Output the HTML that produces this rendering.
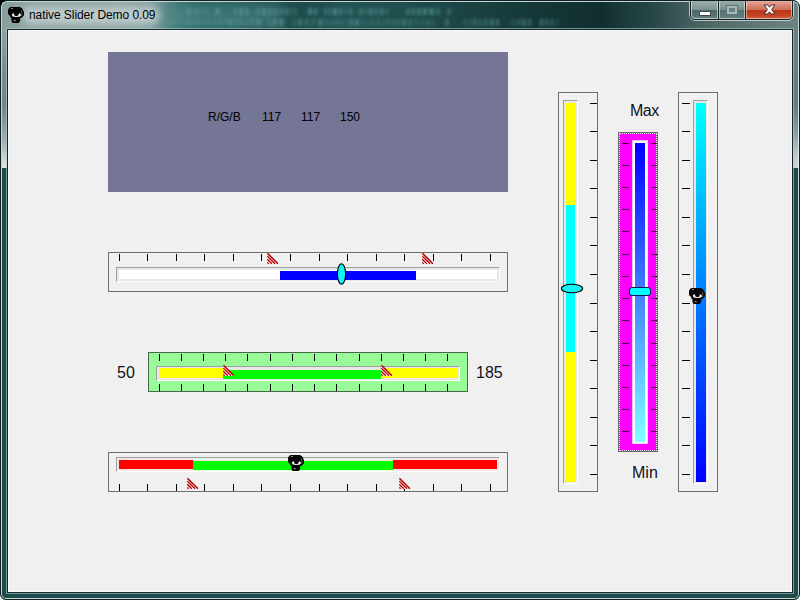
<!DOCTYPE html>
<html><head><meta charset="utf-8"><title>native Slider Demo 0.09</title>
<style>
html,body{margin:0;padding:0}
body{width:800px;height:600px;overflow:hidden;position:relative;background:#f4f6f6;font-family:"Liberation Sans",sans-serif;color:#000}
body div,body svg{position:absolute}
div svg{left:0;top:0}
.t12{font-size:12px;line-height:14px;white-space:nowrap;color:#000}
.t16{font-size:16px;line-height:18px;white-space:nowrap;color:#10101c}
#win{left:0;top:0;width:800px;height:600px;box-sizing:border-box;border:1px solid #14201f;border-radius:7px 7px 6px 6px;overflow:hidden;background:#1d4a4a}
</style></head><body>
<div style="left:0;top:0;width:10px;height:10px;background:#000"></div>
<div id="win">
<div style="left:1px;top:1px;width:796px;height:166px;background:linear-gradient(to right,#93a4a4 0,#8c9e9e 8px,#5d7474 9px,#5d7474 786px,#6a7e7e 791px,#728686 100%)"></div>
<div style="left:1px;top:30px;width:7px;height:137px;background:linear-gradient(to bottom,#8da1a1 0,#788e8e 30%,#728888 55%,#9aabab 78%,#d4dcdc 96%,#dfe5e5 100%)"></div>
<div style="left:791px;top:30px;width:7px;height:137px;background:linear-gradient(to bottom,#6c8080 0,#667b7b 55%,#8a9c9c 74%,#c2cccc 92%,#cdd6d6 100%)"></div>
<div id="tb" style="left:1px;top:1px;width:796px;height:28px;background:linear-gradient(to right,#8a9f9f 0,#8da3a3 30px,#8ea4a4 120px,#84a0a0 148px,#5d8a8a 163px,#3c7373 178px,#2f6464 200px,#2a5c5c 250px,#1f4c4c 300px,#245454 350px,#1f4a4a 420px,#1a4040 480px,#153636 540px,#122f2f 600px,#1d3c3c 625px,#274646 650px,#465e5e 690px,#566c6c 720px,#6e8282 796px)">
<div style="left:185px;top:6px;width:264px;height:7px;background:linear-gradient(to right,rgba(98,165,165,0.58) 0px,rgba(98,165,165,0.58) 3px,transparent 3px,transparent 5px,rgba(98,165,165,0.28) 5px,rgba(98,165,165,0.28) 7px,transparent 7px,transparent 9px,rgba(98,165,165,0.45) 9px,rgba(98,165,165,0.45) 12px,transparent 12px,transparent 14px,rgba(98,165,165,0.26) 14px,rgba(98,165,165,0.26) 17px,transparent 17px,transparent 19px,rgba(98,165,165,0.33) 19px,rgba(98,165,165,0.33) 21px,transparent 21px,transparent 23px,transparent 23px,transparent 28px,rgba(98,165,165,0.47) 28px,rgba(98,165,165,0.47) 33px,transparent 33px,transparent 35px,transparent 35px,transparent 40px,transparent 40px,transparent 47px,rgba(98,165,165,0.44) 47px,rgba(98,165,165,0.44) 50px,transparent 50px,transparent 52px,rgba(98,165,165,0.54) 52px,rgba(98,165,165,0.54) 56px,transparent 56px,transparent 58px,rgba(98,165,165,0.45) 58px,rgba(98,165,165,0.45) 62px,transparent 62px,transparent 64px,transparent 64px,transparent 69px,rgba(98,165,165,0.32) 69px,rgba(98,165,165,0.32) 73px,transparent 73px,transparent 75px,rgba(98,165,165,0.52) 75px,rgba(98,165,165,0.52) 79px,transparent 79px,transparent 81px,rgba(98,165,165,0.38) 81px,rgba(98,165,165,0.38) 85px,transparent 85px,transparent 87px,rgba(98,165,165,0.49) 87px,rgba(98,165,165,0.49) 90px,transparent 90px,transparent 92px,rgba(98,165,165,0.36) 92px,rgba(98,165,165,0.36) 96px,transparent 96px,transparent 98px,rgba(98,165,165,0.51) 98px,rgba(98,165,165,0.51) 101px,transparent 101px,transparent 103px,rgba(98,165,165,0.29) 103px,rgba(98,165,165,0.29) 105px,transparent 105px,transparent 107px,rgba(98,165,165,0.30) 107px,rgba(98,165,165,0.30) 110px,transparent 110px,transparent 112px,transparent 112px,transparent 121px,rgba(98,165,165,0.53) 121px,rgba(98,165,165,0.53) 125px,transparent 125px,transparent 127px,rgba(98,165,165,0.49) 127px,rgba(98,165,165,0.49) 130px,transparent 130px,transparent 132px,transparent 132px,transparent 137px,rgba(98,165,165,0.42) 137px,rgba(98,165,165,0.42) 140px,transparent 140px,transparent 142px,rgba(98,165,165,0.51) 142px,rgba(98,165,165,0.51) 144px,transparent 144px,transparent 146px,rgba(98,165,165,0.60) 146px,rgba(98,165,165,0.60) 150px,transparent 150px,transparent 152px,rgba(98,165,165,0.50) 152px,rgba(98,165,165,0.50) 155px,transparent 155px,transparent 157px,rgba(98,165,165,0.26) 157px,rgba(98,165,165,0.26) 160px,transparent 160px,transparent 162px,rgba(98,165,165,0.46) 162px,rgba(98,165,165,0.46) 165px,transparent 165px,transparent 167px,transparent 167px,transparent 172px,rgba(98,165,165,0.39) 172px,rgba(98,165,165,0.39) 176px,transparent 176px,transparent 178px,rgba(98,165,165,0.31) 178px,rgba(98,165,165,0.31) 180px,transparent 180px,transparent 182px,rgba(98,165,165,0.56) 182px,rgba(98,165,165,0.56) 185px,transparent 185px,transparent 187px,rgba(98,165,165,0.35) 187px,rgba(98,165,165,0.35) 191px,transparent 191px,transparent 193px,rgba(98,165,165,0.49) 193px,rgba(98,165,165,0.49) 196px,transparent 196px,transparent 198px,rgba(98,165,165,0.30) 198px,rgba(98,165,165,0.30) 201px,transparent 201px,transparent 203px,transparent 203px,transparent 212px,transparent 212px,transparent 219px,rgba(98,165,165,0.38) 219px,rgba(98,165,165,0.38) 223px,transparent 223px,transparent 225px,rgba(98,165,165,0.49) 225px,rgba(98,165,165,0.49) 228px,transparent 228px,transparent 230px,rgba(98,165,165,0.48) 230px,rgba(98,165,165,0.48) 234px,transparent 234px,transparent 236px,rgba(98,165,165,0.56) 236px,rgba(98,165,165,0.56) 240px,transparent 240px,transparent 242px,rgba(98,165,165,0.53) 242px,rgba(98,165,165,0.53) 247px,transparent 247px,transparent 249px,rgba(98,165,165,0.39) 249px,rgba(98,165,165,0.39) 253px,transparent 253px,transparent 255px,transparent 255px,transparent 260px,rgba(98,165,165,0.31) 260px,rgba(98,165,165,0.31) 264px,transparent 264px,transparent 266px);filter:blur(1.4px)"></div>
<div style="left:165px;top:17px;width:394px;height:7px;background:linear-gradient(to right,rgba(98,165,165,0.23) 0px,rgba(98,165,165,0.23) 2px,transparent 2px,transparent 4px,rgba(98,165,165,0.23) 4px,rgba(98,165,165,0.23) 8px,transparent 8px,transparent 10px,rgba(98,165,165,0.22) 10px,rgba(98,165,165,0.22) 12px,transparent 12px,transparent 14px,rgba(98,165,165,0.24) 14px,rgba(98,165,165,0.24) 18px,transparent 18px,transparent 20px,rgba(98,165,165,0.38) 20px,rgba(98,165,165,0.38) 23px,transparent 23px,transparent 25px,rgba(98,165,165,0.45) 25px,rgba(98,165,165,0.45) 27px,transparent 27px,transparent 29px,rgba(98,165,165,0.34) 29px,rgba(98,165,165,0.34) 33px,transparent 33px,transparent 35px,rgba(98,165,165,0.23) 35px,rgba(98,165,165,0.23) 38px,transparent 38px,transparent 40px,rgba(98,165,165,0.34) 40px,rgba(98,165,165,0.34) 43px,transparent 43px,transparent 45px,rgba(98,165,165,0.21) 45px,rgba(98,165,165,0.21) 49px,transparent 49px,transparent 51px,rgba(98,165,165,0.31) 51px,rgba(98,165,165,0.31) 55px,transparent 55px,transparent 57px,rgba(98,165,165,0.43) 57px,rgba(98,165,165,0.43) 59px,transparent 59px,transparent 61px,rgba(98,165,165,0.46) 61px,rgba(98,165,165,0.46) 66px,transparent 66px,transparent 68px,rgba(98,165,165,0.36) 68px,rgba(98,165,165,0.36) 71px,transparent 71px,transparent 73px,rgba(98,165,165,0.43) 73px,rgba(98,165,165,0.43) 76px,transparent 76px,transparent 78px,rgba(98,165,165,0.30) 78px,rgba(98,165,165,0.30) 82px,transparent 82px,transparent 84px,rgba(98,165,165,0.44) 84px,rgba(98,165,165,0.44) 87px,transparent 87px,transparent 89px,rgba(98,165,165,0.44) 89px,rgba(98,165,165,0.44) 94px,transparent 94px,transparent 96px,transparent 96px,transparent 101px,rgba(98,165,165,0.34) 101px,rgba(98,165,165,0.34) 104px,transparent 104px,transparent 106px,rgba(98,165,165,0.49) 106px,rgba(98,165,165,0.49) 110px,transparent 110px,transparent 112px,rgba(98,165,165,0.50) 112px,rgba(98,165,165,0.50) 117px,transparent 117px,transparent 119px,transparent 119px,transparent 126px,rgba(98,165,165,0.30) 126px,rgba(98,165,165,0.30) 129px,transparent 129px,transparent 131px,rgba(98,165,165,0.45) 131px,rgba(98,165,165,0.45) 135px,transparent 135px,transparent 137px,rgba(98,165,165,0.30) 137px,rgba(98,165,165,0.30) 142px,transparent 142px,transparent 144px,rgba(98,165,165,0.24) 144px,rgba(98,165,165,0.24) 149px,transparent 149px,transparent 151px,rgba(98,165,165,0.43) 151px,rgba(98,165,165,0.43) 156px,transparent 156px,transparent 158px,rgba(98,165,165,0.33) 158px,rgba(98,165,165,0.33) 161px,transparent 161px,transparent 163px,rgba(98,165,165,0.44) 163px,rgba(98,165,165,0.44) 165px,transparent 165px,transparent 167px,rgba(98,165,165,0.34) 167px,rgba(98,165,165,0.34) 171px,transparent 171px,transparent 173px,rgba(98,165,165,0.42) 173px,rgba(98,165,165,0.42) 175px,transparent 175px,transparent 177px,rgba(98,165,165,0.21) 177px,rgba(98,165,165,0.21) 180px,transparent 180px,transparent 182px,rgba(98,165,165,0.44) 182px,rgba(98,165,165,0.44) 186px,transparent 186px,transparent 188px,rgba(98,165,165,0.49) 188px,rgba(98,165,165,0.49) 192px,transparent 192px,transparent 194px,rgba(98,165,165,0.25) 194px,rgba(98,165,165,0.25) 197px,transparent 197px,transparent 199px,rgba(98,165,165,0.20) 199px,rgba(98,165,165,0.20) 201px,transparent 201px,transparent 203px,rgba(98,165,165,0.23) 203px,rgba(98,165,165,0.23) 208px,transparent 208px,transparent 210px,rgba(98,165,165,0.33) 210px,rgba(98,165,165,0.33) 213px,transparent 213px,transparent 215px,rgba(98,165,165,0.21) 215px,rgba(98,165,165,0.21) 218px,transparent 218px,transparent 220px,rgba(98,165,165,0.27) 220px,rgba(98,165,165,0.27) 224px,transparent 224px,transparent 226px,rgba(98,165,165,0.36) 226px,rgba(98,165,165,0.36) 229px,transparent 229px,transparent 231px,rgba(98,165,165,0.47) 231px,rgba(98,165,165,0.47) 233px,transparent 233px,transparent 235px,rgba(98,165,165,0.40) 235px,rgba(98,165,165,0.40) 239px,transparent 239px,transparent 241px,rgba(98,165,165,0.33) 241px,rgba(98,165,165,0.33) 245px,transparent 245px,transparent 247px,rgba(98,165,165,0.24) 247px,rgba(98,165,165,0.24) 251px,transparent 251px,transparent 253px,rgba(98,165,165,0.21) 253px,rgba(98,165,165,0.21) 257px,transparent 257px,transparent 259px,rgba(98,165,165,0.38) 259px,rgba(98,165,165,0.38) 262px,transparent 262px,transparent 264px,rgba(98,165,165,0.25) 264px,rgba(98,165,165,0.25) 267px,transparent 267px,transparent 269px,transparent 269px,transparent 278px,rgba(98,165,165,0.36) 278px,rgba(98,165,165,0.36) 282px,transparent 282px,transparent 284px,transparent 284px,transparent 289px,transparent 289px,transparent 296px,rgba(98,165,165,0.21) 296px,rgba(98,165,165,0.21) 300px,transparent 300px,transparent 302px,rgba(98,165,165,0.33) 302px,rgba(98,165,165,0.33) 304px,transparent 304px,transparent 306px,rgba(98,165,165,0.38) 306px,rgba(98,165,165,0.38) 310px,transparent 310px,transparent 312px,rgba(98,165,165,0.34) 312px,rgba(98,165,165,0.34) 315px,transparent 315px,transparent 317px,rgba(98,165,165,0.35) 317px,rgba(98,165,165,0.35) 321px,transparent 321px,transparent 323px,rgba(98,165,165,0.46) 323px,rgba(98,165,165,0.46) 327px,transparent 327px,transparent 329px,rgba(98,165,165,0.48) 329px,rgba(98,165,165,0.48) 332px,transparent 332px,transparent 334px,transparent 334px,transparent 339px,transparent 339px,transparent 344px,rgba(98,165,165,0.22) 344px,rgba(98,165,165,0.22) 348px,transparent 348px,transparent 350px,rgba(98,165,165,0.47) 350px,rgba(98,165,165,0.47) 352px,transparent 352px,transparent 354px,rgba(98,165,165,0.39) 354px,rgba(98,165,165,0.39) 359px,transparent 359px,transparent 361px,rgba(98,165,165,0.46) 361px,rgba(98,165,165,0.46) 364px,transparent 364px,transparent 366px,transparent 366px,transparent 373px,rgba(98,165,165,0.50) 373px,rgba(98,165,165,0.50) 376px,transparent 376px,transparent 378px,rgba(98,165,165,0.41) 378px,rgba(98,165,165,0.41) 381px,transparent 381px,transparent 383px,rgba(98,165,165,0.30) 383px,rgba(98,165,165,0.30) 387px,transparent 387px,transparent 389px,rgba(98,165,165,0.23) 389px,rgba(98,165,165,0.23) 392px,transparent 392px,transparent 394px);filter:blur(1.4px)"></div>
<div style="left:168px;top:3px;width:110px;height:22px;background:#5a9a9a;opacity:.35;filter:blur(6px)"></div>
<div style="left:20px;top:5px;width:138px;height:17px;border-radius:9px;background:#d0d9d9;opacity:.75;filter:blur(4.5px)"></div>
</div>
<div style="left:0;top:0;width:796px;height:596px;border:1px solid rgba(235,250,250,.8);border-radius:6px 6px 5px 5px"></div>
<div style="left:5px;top:27px;width:786px;height:564px;border:1px solid rgba(170,208,208,.6)"></div>
<div style="left:6px;top:28px;width:784px;height:562px;border:1px solid #16262a"></div>
<div style="left:7px;top:6px;width:16px;height:16px"><svg viewBox="0 0 16 16" width="16" height="16"><path d="M2.5,0H12L14,1.2L15,3L16,5V8.5L14.8,9.2V10.2L12.2,11V14L10.6,16H4.6L3.4,14V11L2.2,10.6V8.7L0.6,8.1L0,6V3L1,1Z" fill="#050505"/><ellipse cx="8.4" cy="8" rx="4.5" ry="1.9" fill="#fff"/><ellipse cx="8.4" cy="7.1" rx="2.5" ry="2.1" fill="#050505"/><path d="M13.2,3.5Q14.6,6 13.6,9" stroke="#777" stroke-width=".7" fill="none"/><rect x="5.6" y="13" width="2.2" height="1.2" fill="#888"/><rect x="3" y="1" width="1.8" height="0.9" fill="#aaa"/></svg></div>
<div id="ttl" style="left:28px;top:6px;font-size:12px;line-height:16px;white-space:nowrap;color:#000;letter-spacing:-.07px">native Slider Demo 0.09</div>
<div id="btns" style="left:688px;top:-2px;width:103px;height:20px;border:1px solid rgba(225,240,240,.7);border-radius:0 0 6px 6px">
<div style="left:0;top:0;width:101px;height:18px;border:1px solid #152222;border-radius:0 0 5px 5px;overflow:hidden;background:#6d8484">
<div style="left:0;top:0;width:27px;height:18px;background:linear-gradient(to bottom,#9db0b0 0,#8ea2a2 20%,#7d9393 48%,#4d6868 52%,#587373 80%,#678181 100%);border-right:1px solid #152222"></div>
<div style="left:28px;top:0;width:26px;height:18px;background:linear-gradient(to bottom,#9aadad 0,#8a9f9f 20%,#7b9191 48%,#557070 52%,#5e7979 80%,#6b8484 100%);border-right:1px solid #152222"></div>
<div style="left:55px;top:0;width:46px;height:18px;background:linear-gradient(to bottom,#e6ab9c 0,#dc8d7b 20%,#d0705c 48%,#bd3518 52%,#c44526 80%,#d0633f 100%)"></div>
<div style="left:0;top:-1px;width:25px;height:17px;border:1px solid rgba(255,255,255,.55);border-radius:0 0 0 4px"></div>
<div style="left:28px;top:-1px;width:24px;height:17px;border:1px solid rgba(255,255,255,.5)"></div>
<div style="left:55px;top:-1px;width:44px;height:17px;border:1px solid rgba(255,255,255,.5);border-radius:0 0 4px 0"></div>
<div style="left:8px;top:10px;width:10px;height:3px;background:#fff;border:1px solid #3c4c4c"></div>
<div style="left:36px;top:5px;width:6px;height:4px;border:2px solid #a7b8b8;background:#6b8282;outline:1px solid #5f7575"></div>
<svg style="left:71px;top:2px" width="16" height="14" viewBox="0 0 16 14"><path d="M2,2H5.7L7.5,4.2L9.3,2H13L9.5,6.5L13,11H9.3L7.5,8.8L5.7,11H2L5.5,6.5Z" fill="#fff" stroke="#3e2a2a" stroke-width="1" stroke-linejoin="round"/></svg>
</div>
</div>
</div>

<div style="left:8px;top:30px;width:784px;height:562px;background:#f0f0f0;box-shadow:inset 0 0 0 1px #f9f9f9"></div>
<div style="left:108px;top:52px;width:400px;height:140px;background:#757596"></div>
<div class="t12" style="left:208px;top:110px">R/G/B</div>
<div class="t12" style="left:262px;top:110px">117</div>
<div class="t12" style="left:301px;top:110px">117</div>
<div class="t12" style="left:340px;top:110px">150</div>
<div style="left:108px;top:252px;width:400px;height:40px;box-sizing:border-box;border:1px solid #6e6e6e"></div>
<div style="left:119px;top:254px;width:1px;height:7px;background:#000"></div>
<div style="left:147px;top:254px;width:1px;height:7px;background:#000"></div>
<div style="left:176px;top:254px;width:1px;height:7px;background:#000"></div>
<div style="left:204px;top:254px;width:1px;height:7px;background:#000"></div>
<div style="left:233px;top:254px;width:1px;height:7px;background:#000"></div>
<div style="left:261px;top:254px;width:1px;height:7px;background:#000"></div>
<div style="left:290px;top:254px;width:1px;height:7px;background:#000"></div>
<div style="left:319px;top:254px;width:1px;height:7px;background:#000"></div>
<div style="left:347px;top:254px;width:1px;height:7px;background:#000"></div>
<div style="left:376px;top:254px;width:1px;height:7px;background:#000"></div>
<div style="left:404px;top:254px;width:1px;height:7px;background:#000"></div>
<div style="left:433px;top:254px;width:1px;height:7px;background:#000"></div>
<div style="left:461px;top:254px;width:1px;height:7px;background:#000"></div>
<div style="left:490px;top:254px;width:1px;height:7px;background:#000"></div>
<div style="left:116px;top:267px;width:384px;height:15px;box-sizing:border-box;border:1px solid;border-color:#a0a0a0 #fff #fff #a0a0a0;background:#e6e6e6"></div>
<div style="left:119px;top:270px;width:378px;height:9px;background:#fff"></div>
<div style="left:280px;top:271px;width:136px;height:9px;background:#0000ff"></div>
<svg style="left:267px;top:252px" width="13" height="13" viewBox="0 0 13 13"><path d="M0.2,0.8V12H11.4Z" fill="#f6f2f2"/><g stroke="#b80000" stroke-width="1.25" fill="none"><path d="M0.4,1.3L10.9,11.8" stroke-width="1.6"/><path d="M0.3,4.1L8,11.8"/><path d="M0.3,7.3L4.8,11.8"/><path d="M0.3,10.4L1.7,11.8"/></g></svg>
<svg style="left:422px;top:252px" width="13" height="13" viewBox="0 0 13 13"><path d="M0.2,0.8V12H11.4Z" fill="#f6f2f2"/><g stroke="#b80000" stroke-width="1.25" fill="none"><path d="M0.4,1.3L10.9,11.8" stroke-width="1.6"/><path d="M0.3,4.1L8,11.8"/><path d="M0.3,7.3L4.8,11.8"/><path d="M0.3,10.4L1.7,11.8"/></g></svg>
<svg style="left:336px;top:262px" width="12" height="24" viewBox="0 0 12 24"><ellipse cx="5.5" cy="12" rx="4.1" ry="10.3" fill="#14f4f4" stroke="#000" stroke-width="1.1"/></svg>
<div class="t16" style="left:117px;top:364px">50</div>
<div class="t16" style="left:476px;top:364px">185</div>
<div style="left:148px;top:352px;width:320px;height:40px;box-sizing:border-box;border:1px solid #4a6a4c;background:#98fb98"></div>
<div style="left:159px;top:354px;width:1px;height:7px;background:#000"></div>
<div style="left:159px;top:384px;width:1px;height:7px;background:#000"></div>
<div style="left:181px;top:354px;width:1px;height:7px;background:#000"></div>
<div style="left:181px;top:384px;width:1px;height:7px;background:#000"></div>
<div style="left:203px;top:354px;width:1px;height:7px;background:#000"></div>
<div style="left:203px;top:384px;width:1px;height:7px;background:#000"></div>
<div style="left:225px;top:354px;width:1px;height:7px;background:#000"></div>
<div style="left:225px;top:384px;width:1px;height:7px;background:#000"></div>
<div style="left:247px;top:354px;width:1px;height:7px;background:#000"></div>
<div style="left:247px;top:384px;width:1px;height:7px;background:#000"></div>
<div style="left:270px;top:354px;width:1px;height:7px;background:#000"></div>
<div style="left:270px;top:384px;width:1px;height:7px;background:#000"></div>
<div style="left:292px;top:354px;width:1px;height:7px;background:#000"></div>
<div style="left:292px;top:384px;width:1px;height:7px;background:#000"></div>
<div style="left:314px;top:354px;width:1px;height:7px;background:#000"></div>
<div style="left:314px;top:384px;width:1px;height:7px;background:#000"></div>
<div style="left:336px;top:354px;width:1px;height:7px;background:#000"></div>
<div style="left:336px;top:384px;width:1px;height:7px;background:#000"></div>
<div style="left:359px;top:354px;width:1px;height:7px;background:#000"></div>
<div style="left:359px;top:384px;width:1px;height:7px;background:#000"></div>
<div style="left:381px;top:354px;width:1px;height:7px;background:#000"></div>
<div style="left:381px;top:384px;width:1px;height:7px;background:#000"></div>
<div style="left:403px;top:354px;width:1px;height:7px;background:#000"></div>
<div style="left:403px;top:384px;width:1px;height:7px;background:#000"></div>
<div style="left:425px;top:354px;width:1px;height:7px;background:#000"></div>
<div style="left:425px;top:384px;width:1px;height:7px;background:#000"></div>
<div style="left:447px;top:354px;width:1px;height:7px;background:#000"></div>
<div style="left:447px;top:384px;width:1px;height:7px;background:#000"></div>
<div style="left:156px;top:366px;width:304px;height:15px;box-sizing:border-box;border:1px solid;border-color:#a0a0a0 #fff #fff #a0a0a0;background:#e6e6e6"></div>
<div style="left:159px;top:369px;width:298px;height:9px;background:#e6e6e6"></div>
<div style="left:159px;top:368px;width:64px;height:10px;background:#ffff00"></div>
<div style="left:381px;top:368px;width:76px;height:10px;background:#ffff00"></div>
<div style="left:223px;top:370px;width:158px;height:9px;background:#00ff00"></div>
<svg style="left:223px;top:364px" width="13" height="13" viewBox="0 0 13 13"><path d="M0.2,0.8V12H11.4Z" fill="#fdf8f8"/><g stroke="#b80000" stroke-width="1.25" fill="none"><path d="M0.4,1.3L10.9,11.8" stroke-width="1.6"/><path d="M0.3,4.1L8,11.8"/><path d="M0.3,7.3L4.8,11.8"/><path d="M0.3,10.4L1.7,11.8"/></g></svg>
<svg style="left:381px;top:364px" width="13" height="13" viewBox="0 0 13 13"><path d="M0.2,0.8V12H11.4Z" fill="#fdf8f8"/><g stroke="#b80000" stroke-width="1.25" fill="none"><path d="M0.4,1.3L10.9,11.8" stroke-width="1.6"/><path d="M0.3,4.1L8,11.8"/><path d="M0.3,7.3L4.8,11.8"/><path d="M0.3,10.4L1.7,11.8"/></g></svg>
<div style="left:108px;top:452px;width:400px;height:40px;box-sizing:border-box;border:1px solid #6e6e6e"></div>
<div style="left:119px;top:484px;width:1px;height:7px;background:#000"></div>
<div style="left:147px;top:484px;width:1px;height:7px;background:#000"></div>
<div style="left:176px;top:484px;width:1px;height:7px;background:#000"></div>
<div style="left:204px;top:484px;width:1px;height:7px;background:#000"></div>
<div style="left:233px;top:484px;width:1px;height:7px;background:#000"></div>
<div style="left:261px;top:484px;width:1px;height:7px;background:#000"></div>
<div style="left:290px;top:484px;width:1px;height:7px;background:#000"></div>
<div style="left:319px;top:484px;width:1px;height:7px;background:#000"></div>
<div style="left:347px;top:484px;width:1px;height:7px;background:#000"></div>
<div style="left:376px;top:484px;width:1px;height:7px;background:#000"></div>
<div style="left:404px;top:484px;width:1px;height:7px;background:#000"></div>
<div style="left:433px;top:484px;width:1px;height:7px;background:#000"></div>
<div style="left:461px;top:484px;width:1px;height:7px;background:#000"></div>
<div style="left:490px;top:484px;width:1px;height:7px;background:#000"></div>
<div style="left:116px;top:457px;width:384px;height:15px;box-sizing:border-box;border:1px solid;border-color:#a0a0a0 #fff #fff #a0a0a0;background:linear-gradient(to right,#f8e6e6 0,#f8e6e6 76px,#e6f6e6 76px,#e6f6e6 276px,#f8e6e6 276px)"></div>
<div style="left:119px;top:460px;width:378px;height:9px;background:#f6e6e6"></div>
<div style="left:119px;top:460px;width:74px;height:9px;background:#ff0000"></div>
<div style="left:393px;top:460px;width:104px;height:9px;background:#ff0000"></div>
<div style="left:193px;top:461px;width:200px;height:9px;background:#00ff00"></div>
<svg style="left:187px;top:477px" width="13" height="13" viewBox="0 0 13 13"><path d="M0.2,0.8V12H11.4Z" fill="#f6f2f2"/><g stroke="#b80000" stroke-width="1.25" fill="none"><path d="M0.4,1.3L10.9,11.8" stroke-width="1.6"/><path d="M0.3,4.1L8,11.8"/><path d="M0.3,7.3L4.8,11.8"/><path d="M0.3,10.4L1.7,11.8"/></g></svg>
<svg style="left:399px;top:477px" width="13" height="13" viewBox="0 0 13 13"><path d="M0.2,0.8V12H11.4Z" fill="#f6f2f2"/><g stroke="#b80000" stroke-width="1.25" fill="none"><path d="M0.4,1.3L10.9,11.8" stroke-width="1.6"/><path d="M0.3,4.1L8,11.8"/><path d="M0.3,7.3L4.8,11.8"/><path d="M0.3,10.4L1.7,11.8"/></g></svg>
<div style="left:288px;top:455px;width:16px;height:16px"><svg viewBox="0 0 16 16" width="16" height="16"><path d="M2.5,0H12L14,1.2L15,3L16,5V8.5L14.8,9.2V10.2L12.2,11V14L10.6,16H4.6L3.4,14V11L2.2,10.6V8.7L0.6,8.1L0,6V3L1,1Z" fill="#050505"/><ellipse cx="8.4" cy="8" rx="4.5" ry="1.9" fill="#fff"/><ellipse cx="8.4" cy="7.1" rx="2.5" ry="2.1" fill="#050505"/><path d="M13.2,3.5Q14.6,6 13.6,9" stroke="#777" stroke-width=".7" fill="none"/><rect x="5.6" y="13" width="2.2" height="1.2" fill="#888"/><rect x="3" y="1" width="1.8" height="0.9" fill="#aaa"/></svg></div>
<div style="left:558px;top:92px;width:40px;height:400px;box-sizing:border-box;border:1px solid #6e6e6e"></div>
<div style="left:590px;top:103px;width:7px;height:1px;background:#000"></div>
<div style="left:590px;top:131px;width:7px;height:1px;background:#000"></div>
<div style="left:590px;top:160px;width:7px;height:1px;background:#000"></div>
<div style="left:590px;top:188px;width:7px;height:1px;background:#000"></div>
<div style="left:590px;top:217px;width:7px;height:1px;background:#000"></div>
<div style="left:590px;top:245px;width:7px;height:1px;background:#000"></div>
<div style="left:590px;top:274px;width:7px;height:1px;background:#000"></div>
<div style="left:590px;top:303px;width:7px;height:1px;background:#000"></div>
<div style="left:590px;top:331px;width:7px;height:1px;background:#000"></div>
<div style="left:590px;top:360px;width:7px;height:1px;background:#000"></div>
<div style="left:590px;top:388px;width:7px;height:1px;background:#000"></div>
<div style="left:590px;top:417px;width:7px;height:1px;background:#000"></div>
<div style="left:590px;top:445px;width:7px;height:1px;background:#000"></div>
<div style="left:590px;top:474px;width:7px;height:1px;background:#000"></div>
<div style="left:563px;top:100px;width:15px;height:384px;box-sizing:border-box;border:1px solid;border-color:#a0a0a0 #fff #fff #a0a0a0;background:#e6e6e6"></div>
<div style="left:566px;top:103px;width:9px;height:378px;background:#fff"></div>
<div style="left:566px;top:103px;width:10px;height:102px;background:#ffff00"></div>
<div style="left:566px;top:352px;width:10px;height:130px;background:#ffff00"></div>
<div style="left:566px;top:205px;width:9px;height:147px;background:#00ffff"></div>
<svg style="left:560px;top:282px" width="24" height="13" viewBox="0 0 24 13"><ellipse cx="12" cy="6.5" rx="10.6" ry="4.2" fill="#14f4f4" stroke="#000" stroke-width="1.1"/></svg>
<div class="t16" style="left:630px;top:102px;letter-spacing:-.55px">Max</div>
<div class="t16" style="left:632px;top:464px">Min</div>
<div style="left:618px;top:132px;width:40px;height:320px;box-sizing:border-box;border:1px solid #6a6a6a;background:#ff00ff"></div>
<div style="left:619px;top:133px;width:38px;height:318px;box-sizing:border-box;border:1px solid #7c5c7c"></div>
<div style="left:619px;top:133px;width:38px;height:318px;box-sizing:border-box;border:1px dotted #f0e4f0"></div>
<div style="left:622px;top:143px;width:7px;height:1px;background:#4a004a"></div>
<div style="left:651px;top:143px;width:6px;height:1px;background:#4a004a"></div>
<div style="left:622px;top:165px;width:7px;height:1px;background:#4a004a"></div>
<div style="left:651px;top:165px;width:6px;height:1px;background:#4a004a"></div>
<div style="left:622px;top:187px;width:7px;height:1px;background:#4a004a"></div>
<div style="left:651px;top:187px;width:6px;height:1px;background:#4a004a"></div>
<div style="left:622px;top:209px;width:7px;height:1px;background:#4a004a"></div>
<div style="left:651px;top:209px;width:6px;height:1px;background:#4a004a"></div>
<div style="left:622px;top:231px;width:7px;height:1px;background:#4a004a"></div>
<div style="left:651px;top:231px;width:6px;height:1px;background:#4a004a"></div>
<div style="left:622px;top:254px;width:7px;height:1px;background:#4a004a"></div>
<div style="left:651px;top:254px;width:6px;height:1px;background:#4a004a"></div>
<div style="left:622px;top:276px;width:7px;height:1px;background:#4a004a"></div>
<div style="left:651px;top:276px;width:6px;height:1px;background:#4a004a"></div>
<div style="left:622px;top:298px;width:7px;height:1px;background:#4a004a"></div>
<div style="left:651px;top:298px;width:6px;height:1px;background:#4a004a"></div>
<div style="left:622px;top:320px;width:7px;height:1px;background:#4a004a"></div>
<div style="left:651px;top:320px;width:6px;height:1px;background:#4a004a"></div>
<div style="left:622px;top:343px;width:7px;height:1px;background:#4a004a"></div>
<div style="left:651px;top:343px;width:6px;height:1px;background:#4a004a"></div>
<div style="left:622px;top:365px;width:7px;height:1px;background:#4a004a"></div>
<div style="left:651px;top:365px;width:6px;height:1px;background:#4a004a"></div>
<div style="left:622px;top:387px;width:7px;height:1px;background:#4a004a"></div>
<div style="left:651px;top:387px;width:6px;height:1px;background:#4a004a"></div>
<div style="left:622px;top:409px;width:7px;height:1px;background:#4a004a"></div>
<div style="left:651px;top:409px;width:6px;height:1px;background:#4a004a"></div>
<div style="left:622px;top:431px;width:7px;height:1px;background:#4a004a"></div>
<div style="left:651px;top:431px;width:6px;height:1px;background:#4a004a"></div>
<div style="left:632px;top:140px;width:16px;height:304px;box-sizing:border-box;border:1px solid;border-color:#dcc4ea #f6dcf9 #f6dcf9 #dcc4ea;background:#fbf6ff"></div>
<div style="left:635px;top:143px;width:10px;height:299px;background:linear-gradient(to bottom,#0000ff,#80ffff)"></div>
<div style="left:629px;top:287px;width:22px;height:9px;box-sizing:border-box;border:1px solid #0a1a50;border-radius:3px;background:#00ffff"></div>
<div style="left:678px;top:92px;width:40px;height:400px;box-sizing:border-box;border:1px solid #6e6e6e"></div>
<div style="left:682px;top:103px;width:8px;height:1px;background:#000"></div>
<div style="left:682px;top:131px;width:8px;height:1px;background:#000"></div>
<div style="left:682px;top:160px;width:8px;height:1px;background:#000"></div>
<div style="left:682px;top:188px;width:8px;height:1px;background:#000"></div>
<div style="left:682px;top:217px;width:8px;height:1px;background:#000"></div>
<div style="left:682px;top:245px;width:8px;height:1px;background:#000"></div>
<div style="left:682px;top:274px;width:8px;height:1px;background:#000"></div>
<div style="left:682px;top:303px;width:8px;height:1px;background:#000"></div>
<div style="left:682px;top:331px;width:8px;height:1px;background:#000"></div>
<div style="left:682px;top:360px;width:8px;height:1px;background:#000"></div>
<div style="left:682px;top:388px;width:8px;height:1px;background:#000"></div>
<div style="left:682px;top:417px;width:8px;height:1px;background:#000"></div>
<div style="left:682px;top:445px;width:8px;height:1px;background:#000"></div>
<div style="left:682px;top:474px;width:8px;height:1px;background:#000"></div>
<div style="left:693px;top:100px;width:15px;height:384px;box-sizing:border-box;border:1px solid;border-color:#a0a0a0 #fff #fff #a0a0a0;background:#e6e6e6"></div>
<div style="left:696px;top:103px;width:9px;height:378px;background:#fff"></div>
<div style="left:696px;top:103px;width:10px;height:379px;background:linear-gradient(to bottom,#00ffff,#0000ff)"></div>
<div style="left:689px;top:288px;width:16px;height:16px"><svg viewBox="0 0 16 16" width="16" height="16"><path d="M2.5,0H12L14,1.2L15,3L16,5V8.5L14.8,9.2V10.2L12.2,11V14L10.6,16H4.6L3.4,14V11L2.2,10.6V8.7L0.6,8.1L0,6V3L1,1Z" fill="#050505"/><ellipse cx="8.4" cy="8" rx="4.5" ry="1.9" fill="#fff"/><ellipse cx="8.4" cy="7.1" rx="2.5" ry="2.1" fill="#050505"/><path d="M13.2,3.5Q14.6,6 13.6,9" stroke="#777" stroke-width=".7" fill="none"/><rect x="5.6" y="13" width="2.2" height="1.2" fill="#888"/><rect x="3" y="1" width="1.8" height="0.9" fill="#aaa"/></svg></div>
</body></html>
